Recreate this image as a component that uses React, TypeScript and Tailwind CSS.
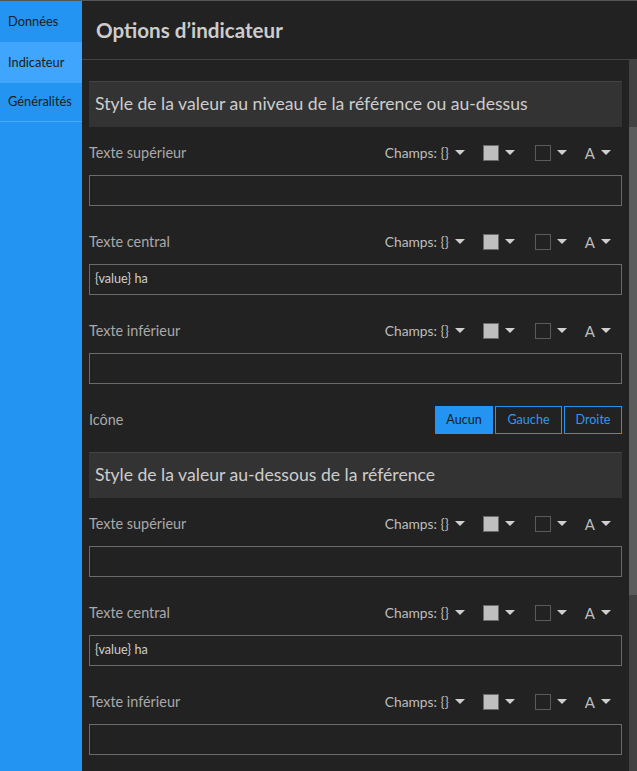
import type { ReactNode } from "react";

const font = { fontFamily: "Lato, 'Noto Sans', sans-serif" };

function Caret() {
  return (
    <svg width="10" height="6" viewBox="0 0 10 6" className="ml-[6px] shrink-0">
      <path d="M0 0 L10 0 L5 5 Z" fill="#cfcfcf" />
    </svg>
  );
}

function FieldRow({ label, value }: { label: string; value?: string }) {
  return (
    <div className="flex flex-col">
      <div className="flex h-[22px] items-center justify-between">
        <span className="text-[14.4px] text-[#a9a9a9]">{label}</span>
        <div className="flex items-center pr-[11px] text-[13.8px] text-[#bdbdbd]">
          <span>Champs: {"{}"}</span>
          <Caret />
          <span className="ml-[18px] h-4 w-4 border border-[#6a6a6a] bg-[#bfbfbf]" />
          <Caret />
          <span className="ml-[20px] h-4 w-4 border border-[#5a5a5a]" />
          <Caret />
          <span className="ml-[18px] text-[15px]">A</span>
          <Caret />
        </div>
      </div>
      <div className="mt-[11px] flex h-[31px] items-center border border-[#6b6b6b] px-[5px] text-[12.6px] text-[#cfcfcf]">
        {value}
      </div>
    </div>
  );
}

function SectionHeader({ children }: { children: ReactNode }) {
  return (
    <div className="flex h-[46px] items-center border-t border-[#444] bg-[#333] px-[6px] text-[17.6px] text-[#cdcdcd]">
      {children}
    </div>
  );
}

function Section({ title }: { title: string }) {
  return (
    <>
      <SectionHeader>{title}</SectionHeader>
      <div className="flex flex-col gap-[25px] pt-[15px]">
        <FieldRow label="Texte supérieur" />
        <FieldRow label="Texte central" value="{value} ha" />
        <FieldRow label="Texte inférieur" />
      </div>
    </>
  );
}

export default function App() {
  return (
    <div className="flex h-[771px] w-[637px] overflow-hidden border-t border-[#555] bg-[#222]" style={font}>
      <nav className="flex w-[82px] shrink-0 flex-col bg-[#2394f1] text-[12.8px] text-[#1b1b1b]">
        <div className="flex h-[41px] items-center px-2">Données</div>
        <div className="flex h-[41px] items-center bg-[#3fa5fd] px-2">Indicateur</div>
        <div className="flex h-[39px] items-center border-b border-[#4aa9f7] px-2">Généralités</div>
      </nav>
      <main className="flex min-w-0 flex-1 flex-col">
        <header className="flex h-[59px] shrink-0 items-center border-b border-[#444] px-[14px] text-[20.6px] font-bold text-[#cccccc]">
          Options d’indicateur
        </header>
        <div className="flex min-h-0 flex-1">
          <div className="flex min-w-0 flex-1 flex-col overflow-hidden px-[7px] pt-[21px]">
            <Section title="Style de la valeur au niveau de la référence ou au-dessus" />
            <div className="mt-[22px] flex h-[28px] items-center justify-between">
              <span className="text-[14.4px] text-[#a9a9a9]">Icône</span>
              <div className="flex gap-[2px] text-[12.6px]">
                <button className="h-[28px] w-[58px] bg-[#2394f1] text-[#1b1b1b]">Aucun</button>
                <button className="h-[28px] w-[67px] border border-[#2394f1] text-[#2d99f2]">Gauche</button>
                <button className="h-[28px] w-[58px] border border-[#2394f1] text-[#2d99f2]">Droite</button>
              </div>
            </div>
            <div className="mt-[18px]">
              <Section title="Style de la valeur au-dessous de la référence" />
            </div>
          </div>
          <div className="flex w-[8px] shrink-0 flex-col bg-[#424242]">
            <div className="mt-[67px] h-[468px] bg-[#5c5c5c]" />
          </div>
        </div>
      </main>
    </div>
  );
}
